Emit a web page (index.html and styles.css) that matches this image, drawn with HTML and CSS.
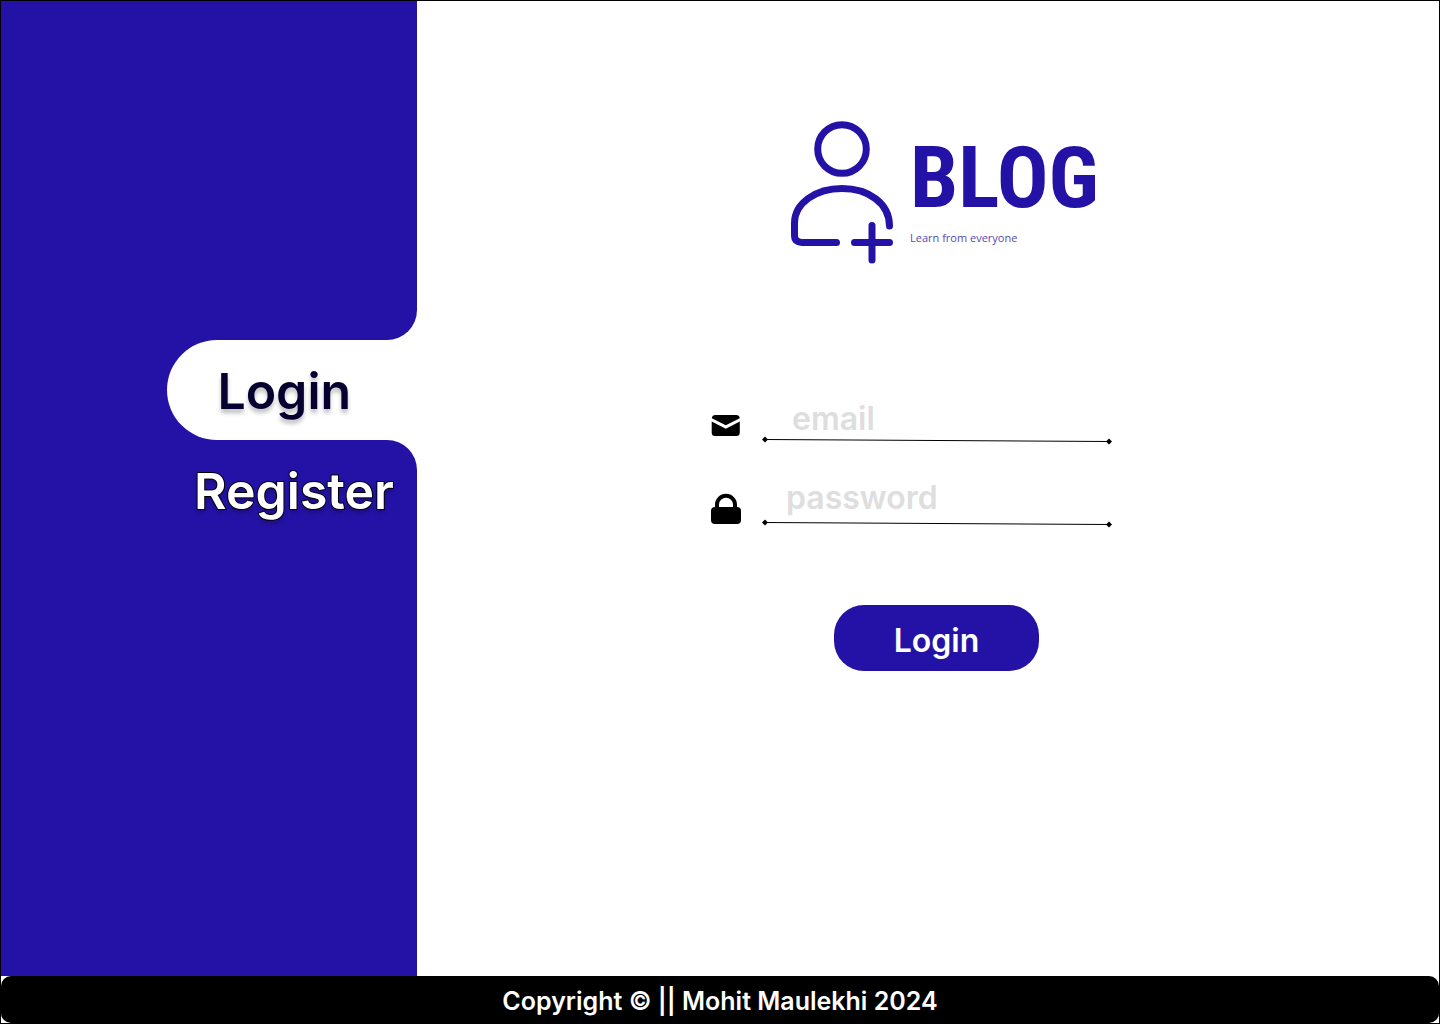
FILE: index.html
```html
<!DOCTYPE html>
<html lang="en">
<head>
<meta charset="utf-8">
<meta name="viewport" content="width=device-width, initial-scale=1">
<title>Blog - Login</title>
<link rel="stylesheet" href="styles.css">
</head>
<body>
<div class="page">
  <nav class="sidebar">
    <div class="sidebar-top"></div>
    <div class="tab-row"><a class="tab tab-active" href="#login">Login</a></div>
    <div class="sidebar-rest"><a class="tab tab-register" href="#register">Register</a></div>
  </nav>
  <main class="content">
    <div class="column">
      <header class="logo">
        <svg class="logo-icon" viewBox="0 0 104 146" fill="none" stroke="currentColor" stroke-width="7" stroke-linecap="round" aria-hidden="true">
          <circle cx="52" cy="29" r="24.3"/>
          <path d="M46.500 122.500H12Q4.500 122 4.500 116V103C4.500 83 26 68.500 52 68.500S99.500 83 99.500 106"/>
          <path d="M64.500 122.500H99.500M82 105.500V140"/>
        </svg>
        <div class="logo-text">
          <span class="logo-name">BLOG</span>
          <span class="logo-tagline">Learn from everyone</span>
        </div>
      </header>
      <form class="form">
        <div class="field">
          <label class="field-label" for="email" aria-label="Email">
            <svg class="field-icon" viewBox="0 0 30 30" aria-hidden="true">
              <path d="M4.500 4H25Q28.500 4 28.700 7.200L14.800 14.200 .8 7.200Q1.200 4 4.500 4Z"/>
              <path d="M.7 10.500L14.800 17.700 28.800 10.500V21.500Q28.800 25 25.500 25H4Q.7 25 .7 21.500Z"/>
            </svg>
          </label>
          <div class="entry">
            <input class="input input-email" id="email" type="email" placeholder="email">
            <svg class="rule" viewBox="0 0 350 8" aria-hidden="true"><path d="M3 2.500L347 4.500" stroke="currentColor"/><path d="M0 2.500L3 -.5 6 2.500 3 5.500ZM344 4.500L347 1.500 350 4.500 347 7.500Z"/></svg>
          </div>
        </div>
        <div class="field">
          <label class="field-label" for="password" aria-label="Password">
            <svg class="field-icon" viewBox="0 0 30 30" aria-hidden="true">
              <path d="M6 15V10.500A9 8.700 0 0 1 24 10.500V15" fill="none" stroke="currentColor" stroke-width="4"/>
              <rect y="13" width="30" height="17" rx="4"/>
            </svg>
          </label>
          <div class="entry">
            <input class="input input-password" id="password" type="password" placeholder="password">
            <svg class="rule" viewBox="0 0 350 8" aria-hidden="true"><path d="M3 2.500L347 4.500" stroke="currentColor"/><path d="M0 2.500L3 -.5 6 2.500 3 5.500ZM344 4.500L347 1.500 350 4.500 347 7.500Z"/></svg>
          </div>
        </div>
        <button class="submit" type="submit">Login</button>
      </form>
    </div>
  </main>
  <footer class="footer">Copyright © || Mohit Maulekhi 2024</footer>
</div>
</body>
</html>
```
FILE: styles.css
```css
* { box-sizing: border-box; }

body {
  margin: 0;
  background: #fff;
  font-family: Inter, sans-serif;
  font-weight: 600;
}

.page {
  display: grid;
  grid-template-columns: 416fr 1022fr;
  grid-template-rows: 1fr auto;
  min-height: 100vh;
  border: 1px solid #000;
}

.sidebar {
  display: flex;
  flex-direction: column;
}

.sidebar-top {
  height: 339px;
  background: #2412a6;
  border-radius: 0 0 30px 0;
}

.tab-row {
  padding-left: 40%;
  background: #2412a6;
}

.sidebar-rest {
  flex: 1;
  background: #2412a6;
  border-radius: 0 30px 0 0;
}

.tab {
  display: block;
  height: 100px;
  font-size: 50px;
  line-height: 102px;
  text-decoration: none;
  text-shadow: 0 4px 4px rgba(0, 0, 0, 0.25);
}

.tab-active {
  padding-left: 50px;
  background: #fff;
  border-radius: 50px 0 0 50px;
  color: #060030;
}

.tab-register {
  padding-left: 193px;
  color: #fff;
  -webkit-text-stroke: 2px #000;
  paint-order: stroke fill;
}

.content {
  display: grid;
  grid-template-columns: 294fr 402px 326fr;
}

.column {
  grid-column: 2;
  padding-top: 119px;
}

.logo {
  display: flex;
  gap: 16px;
  margin-left: 79px;
  color: #2412a6;
}

.logo-icon {
  flex: none;
  width: 104px;
  height: 146px;
}

.logo-text {
  display: flex;
  flex-direction: column;
  padding-top: 6px;
}

.logo-name {
  font-family: "Roboto Condensed", "Liberation Sans Narrow", sans-serif;
  font-size: 86px;
  font-weight: 700;
  line-height: 104px;
}

.logo-tagline {
  font-family: "Open Sans", sans-serif;
  font-size: 11px;
  font-weight: 400;
  line-height: 16px;
  color: #5648b5;
}

.form {
  display: flex;
  flex-direction: column;
  gap: 35px;
  padding-top: 131px;
}

.field {
  display: grid;
  grid-template-columns: 30px 350px;
  gap: 21px;
  align-items: center;
}

.field-label {
  padding-top: 10px;
}

.field-icon,
.rule {
  display: block;
  width: 100%;
  overflow: visible;
}

.entry {
  height: 48px;
}

.input {
  display: block;
  width: 100%;
  height: 40px;
  border: 0;
  outline: 0;
  background: transparent;
  font: inherit;
  font-size: 32px;
}

.input::placeholder {
  color: #dedede;
  opacity: 1;
}

.input-email { padding: 2px 0 0 30px; }
.input-password { padding: 0 0 6px 24px; }

.submit {
  width: 205px;
  height: 66px;
  margin: 42px 0 0 123px;
  padding: 4px 0 0;
  border: 0;
  border-radius: 30px;
  background: #2412a6;
  color: #fff;
  font: inherit;
  font-size: 32px;
}

.footer {
  grid-column: 1 / -1;
  padding-top: 4px;
  background: #000;
  border-radius: 10px;
  color: #fff;
  font-size: 25px;
  line-height: 43px;
  text-align: center;
}
```
